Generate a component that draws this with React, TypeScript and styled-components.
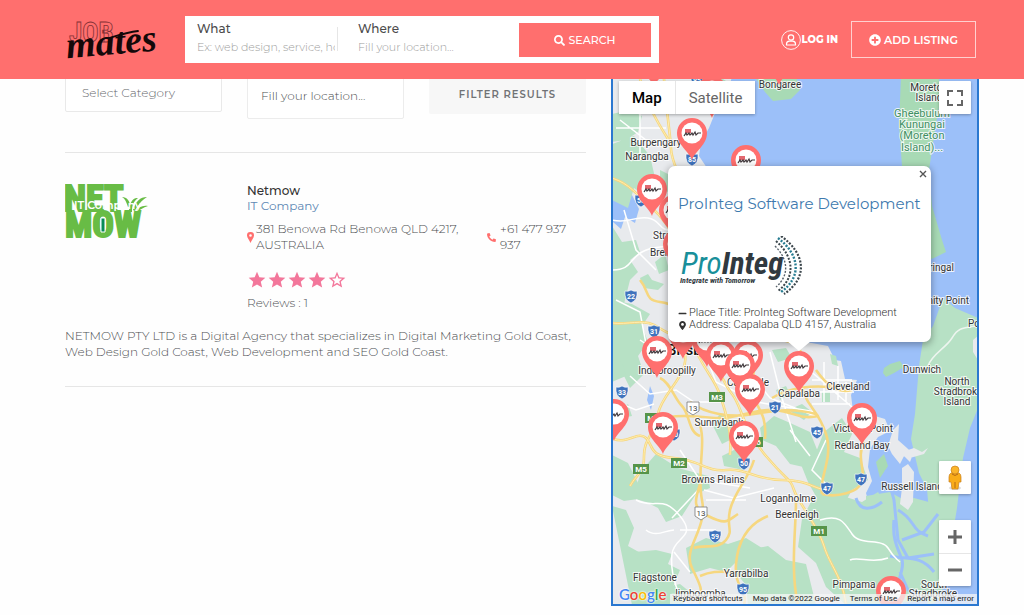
import React from "react";
import styled, { createGlobalStyle } from "styled-components";
import { FaSearch, FaPlusCircle, FaMapMarkerAlt, FaPhone, FaMinus } from "react-icons/fa";
import { MdStar, MdStarBorder } from "react-icons/md";

const coral = "#ff6f6e";
const sans = `Montserrat, Inter, "Open Sans", sans-serif`;
const mapSans = `Roboto, "Liberation Sans", sans-serif`;
const narrow = `"Liberation Sans Narrow", "Roboto Condensed", Roboto, sans-serif`;

const GlobalStyle = createGlobalStyle`
  *, *::before, *::after { box-sizing: border-box; }
  body { margin: 0; background: #fefefe; font-family: ${sans}; font-size: 12px; line-height: 16px; font-weight: 300; color: #4d4f52; }
  button, input, select { font-family: inherit; font-weight: inherit; }
  h1, h2, p { margin: 0; font-weight: inherit; }
  a { text-decoration: none; }
`;

/* ---------- header ---------- */

const Header = styled.header`
  position: fixed;
  inset: 0 0 auto 0;
  z-index: 10;
  display: flex;
  align-items: center;
  height: 79px;
  padding: 0 48px 0 65px;
  background: ${coral};
`;

const LogoLink = styled.a`
  flex: 0 0 120px;
  height: 44px;
`;

const SearchForm = styled.form`
  flex: 0 1 474px;
  display: grid;
  grid-template-columns: 141px 1fr 132px;
  gap: 20px;
  height: 47px;
  padding: 7px 8px 6px 12px;
  background: #fff;
`;

const SearchField = styled.label<{ $divided?: boolean }>`
  display: flex;
  flex-direction: column;
  align-items: flex-start;
  gap: 2px;
  min-width: 0;
  margin-top: -3px;
  padding-right: 3px;
  font-size: 12px;
  line-height: 17px;
  font-weight: 500;
  color: #4b4b4b;
  background: ${(p) => (p.$divided ? "linear-gradient(#e6e6e6, #e6e6e6) right 7px / 1px 24px no-repeat" : "none")};
`;

const SearchInput = styled.input`
  width: 100%;
  height: 16px;
  padding: 0;
  border: 0;
  outline: 0;
  background: transparent;
  font-size: 11px;
  font-weight: 300;
  color: #555;
  &::placeholder { color: #9c9c9c; opacity: 1; }
`;

const SearchButton = styled.button`
  display: flex;
  align-items: center;
  justify-content: center;
  gap: 3px;
  border: 0;
  background: ${coral};
  color: #fff;
  font-size: 11px;
  font-weight: 500;
`;

const Account = styled.nav`
  display: flex;
  align-items: center;
  gap: 13px;
  margin-left: auto;
`;

const LoginLink = styled.a`
  display: flex;
  align-items: center;
  color: #fff;
  font-size: 10px;
  font-weight: 800;
`;

const AddButton = styled.button`
  display: flex;
  align-items: center;
  justify-content: center;
  gap: 3px;
  width: 125px;
  height: 37px;
  padding: 0;
  border: 1px solid #ffd0cf;
  background: transparent;
  color: #fff;
  font-size: 11px;
  font-weight: 600;
`;

/* ---------- page ---------- */

const Main = styled.main`
  display: grid;
  grid-template-columns: 521fr 368fr;
  gap: 25px;
  align-items: start;
  padding: 74px 45px 0 65px;
`;

const Filters = styled.form`
  display: grid;
  grid-template-columns: repeat(3, 1fr);
  gap: 25px;
  align-items: start;
  height: 79px;
  border-bottom: 1px solid #e6e6e6;
`;

const CategorySelect = styled.select`
  height: 38px;
  padding: 0 16px 2px;
  appearance: none;
  border: 1px solid #e9e9e9;
  border-radius: 2px;
  background: #fff;
  font-size: 12px;
  color: #66696c;
`;

const LocationInput = styled.input`
  min-width: 0;
  height: 45px;
  padding: 0 13px 2px;
  border: 1px solid #ececec;
  border-radius: 2px;
  background: #fff;
  font-size: 12px;
  &::placeholder { color: #4d4f52; opacity: 1; }
`;

const FilterButton = styled.button`
  height: 40px;
  padding: 0;
  border: 0;
  border-radius: 2px;
  background: #f7f7f7;
  color: #707275;
  font-size: 10px;
  font-weight: 600;
  letter-spacing: 1px;
`;

const Listing = styled.article`
  display: grid;
  grid-template-columns: repeat(3, 1fr);
  column-gap: 25px;
  padding: 30px 0 26px;
  border-bottom: 1px solid #e6e6e6;
`;

const ListingLogo = styled.a`
  padding-top: 1px;
`;

const Details = styled.div`
  grid-column: span 2;
`;

const ListingName = styled.h2`
  font-size: 12px;
  line-height: 16px;
  font-weight: 500;
  color: #333;
`;

const CategoryLink = styled.a`
  display: block;
  line-height: 14px;
  font-weight: 400;
  color: #6088b4;
`;

const Contact = styled.div`
  display: grid;
  grid-template-columns: 226px 1fr;
  gap: 14px;
  margin-top: 8px;
`;

const ContactItem = styled.div<{ $narrow?: boolean }>`
  display: flex;
  align-items: center;
  gap: ${(p) => (p.$narrow ? "4px" : "2px")};
  padding-right: ${(p) => (p.$narrow ? "14px" : "0")};
  svg { flex: none; color: ${coral}; }
`;

const Rating = styled.div`
  display: flex;
  margin: 17px 0 5px;
  color: #f3779b;
`;

const Description = styled.p`
  grid-column: 1 / -1;
  margin-top: 17px;
`;

/* ---------- map ---------- */

const MapPanel = styled.section`
  position: relative;
  height: 532px;
  overflow: hidden;
  border: 2px solid #2b78d0;
  background: #9cc0f9;
  font-family: ${mapSans};
  font-weight: 400;
`;

const MapCanvas = styled.svg`
  display: block;
  width: 100%;
  height: 100%;
`;

const MapTypes = styled.div`
  position: absolute;
  top: 5px;
  left: 6px;
  display: flex;
  height: 33px;
  background: #fff;
  box-shadow: 0 1px 3px rgba(0, 0, 0, 0.3);
`;

const MapType = styled.button<{ $active?: boolean }>`
  padding: 0 13px;
  border: 0;
  border-left: ${(p) => (p.$active ? "0" : "1px solid #e6e6e6")};
  background: transparent;
  font-size: 15px;
  font-weight: ${(p) => (p.$active ? 500 : 400)};
  color: ${(p) => (p.$active ? "#000" : "#666")};
`;

const MapTool = styled.div<{ $top: number }>`
  position: absolute;
  right: 6px;
  top: ${(p) => p.$top}px;
  display: flex;
  flex-direction: column;
  width: 32px;
  background: #fff;
  border-radius: 1px;
  box-shadow: 0 1px 3px rgba(0, 0, 0, 0.3);
`;

const ToolButton = styled.button`
  display: grid;
  place-items: center;
  height: 33px;
  padding: 0;
  border: 0;
  background: transparent;
  & + & { border-top: 1px solid #e6e6e6; }
`;

const InfoWindow = styled.div`
  position: absolute;
  top: 90px;
  left: 55px;
  width: 263px;
  height: 176px;
  padding: 28px 10px 0;
  border-radius: 7px;
  background: #fff;
  box-shadow: 0 2px 7px 1px rgba(0, 0, 0, 0.3);
  font-size: 10px;
  line-height: 12px;
  color: #333;
  &::after {
    content: "";
    position: absolute;
    top: 175px;
    left: 119px;
    border: 12px solid transparent;
    border-top: 10px solid #fff;
    border-bottom: 0;
  }
`;

const InfoTitle = styled.h2`
  font-family: ${sans};
  font-size: 15px;
  line-height: 20px;
  white-space: nowrap;
  a { color: #3d79ae; }
`;

const InfoLogo = styled.svg`
  display: block;
  margin: 22px 0 11px;
`;

const InfoLine = styled.p`
  display: flex;
  align-items: center;
  gap: 2px;
  font-size: 11px;
  font-weight: 300;
  white-space: nowrap;
`;

const CloseButton = styled.button`
  position: absolute;
  top: 3px;
  right: 3px;
  width: 10px;
  height: 10px;
  padding: 0;
  border: 0;
  background: transparent;
  line-height: 0;
`;

const GoogleMark = styled.a`
  position: absolute;
  left: 6px;
  bottom: 1px;
  font-size: 15px;
  line-height: 18px;
  font-family: Lato, sans-serif;
  font-weight: 600;
  text-shadow: 0 0 2px #fff, 0 0 2px #fff;
`;

const Attribution = styled.div`
  position: absolute;
  right: 0;
  bottom: 0;
  display: flex;
  gap: 10px;
  height: 10px;
  padding: 0 3px;
  background: rgba(245, 245, 245, 0.75);
  font-size: 8px;
  line-height: 10px;
  color: #222;
  white-space: nowrap;
  a, button { padding: 0; border: 0; background: transparent; font-size: 8px; line-height: 10px; color: #222; }
`;

const Letter = styled.span<{ $c: string }>`
  color: ${(p) => p.$c};
`;

/* ---------- map data ---------- */

type Point = [number, number];

const pins: Point[] = [
  [712, 91], [779, 58], [654, 60],
  [692, 133], [746, 160], [674, 210], [678, 244], [652, 189],
  [683, 332], [707, 340], [748, 355], [657, 351], [721, 355], [740, 365], [750, 389], [799, 366],
  [614, 414], [663, 427], [744, 436], [862, 418], [891, 591],
];

const labels: { t: string; x: number; y: number; s?: number; w?: number; c?: string; a?: "start" | "middle" | "end" }[] = [
  { t: "Bongaree", x: 780, y: 88 },
  { t: "Burpengary", x: 656, y: 146 },
  { t: "Narangba", x: 647, y: 160 },
  { t: "Strathpine", x: 653, y: 239, a: "start" },
  { t: "Brendale", x: 650, y: 256, a: "start" },
  { t: "Brisbane", x: 667, y: 355, s: 15, w: 500, a: "start", c: "#111" },
  { t: "Indooroopilly", x: 667, y: 374 },
  { t: "Carindale", x: 748, y: 386 },
  { t: "Capalaba", x: 799, y: 397 },
  { t: "Cleveland", x: 848, y: 390 },
  { t: "Sunnybank", x: 719, y: 426 },
  { t: "Victoria Point", x: 863, y: 432 },
  { t: "Redland Bay", x: 862, y: 449 },
  { t: "Browns Plains", x: 713, y: 483 },
  { t: "Loganholme", x: 788, y: 502 },
  { t: "Beenleigh", x: 797, y: 518 },
  { t: "Russell Island", x: 912, y: 490 },
  { t: "Flagstone", x: 655, y: 581 },
  { t: "Yarrabilba", x: 746, y: 577 },
  { t: "Jimboomba", x: 699, y: 597 },
  { t: "Pimpama", x: 854, y: 588 },
  { t: "South", x: 934, y: 588 },
  { t: "Stradbroke", x: 933, y: 597 },
  { t: "Dunwich", x: 922, y: 373 },
  { t: "Amity Point", x: 969, y: 304, a: "end" },
  { t: "Kooringal", x: 954, y: 271, a: "end" },
  { t: "Point Lookout", x: 968, y: 327, a: "start" },
  { t: "North", x: 957, y: 385 },
  { t: "Stradbroke", x: 958, y: 395 },
  { t: "Island", x: 957, y: 405 },
  { t: "Moreton", x: 929, y: 91 },
  { t: "Island", x: 929, y: 101 },
  { t: "Gheebulum", x: 922, y: 117, s: 11, c: "#3f8f63" },
  { t: "Kunungai", x: 922, y: 128, s: 11, c: "#3f8f63" },
  { t: "(Moreton", x: 922, y: 139, s: 11, c: "#3f8f63" },
  { t: "Island)...", x: 922, y: 151, s: 11, c: "#3f8f63" },
];

const shields: [string, number, number][] = [
  ["85", 697, 80], ["85", 692, 159], ["58", 641, 200], ["22", 631, 296], ["31", 654, 331], ["33", 622, 392],
  ["21", 775, 407], ["20", 674, 434], ["50", 744, 463], ["45", 817, 432], ["47", 861, 479], ["47", 827, 488],
  ["59", 715, 536], ["95", 743, 589],
];
const motorways: [string, number, number][] = [
  ["M3", 717, 397], ["M2", 679, 463], ["M5", 641, 469], ["M1", 819, 531], ["M7", 653, 418], ["M6", 755, 442],
];
const routes: Point[] = [[693, 408], [701, 513]];

const greens = [
  "M612 114l18-4 12 6-4 16-12 8-14 2zM612 144l22-8 16 20 6 26-8 16-14-10-6 20-16-8z",
  "M612 226l10 16 14-2 4 12-10 8 8 12-8 8-6 24-12 4z",
  "M640 278l8-4 4 6 12 4-6 6-14-2zM655 262l10-8 4 16-10 4z",
  "M612 300l20 4 18 10-8 12 6 16-10 14 6 18-14 14-8-16-10-2z",
  "M705 79h18l9 6-12 14-6-10-10 0z",
  "M660 170l8 4v18l-8-4z",
  "M612 455l16 8 12 24-2 12-14 2-12-6z",
  "M642 470l14-16 22 14 30 8 2 12-14 6-14 22-16 6-8-14-12-6-14-4z",
  "M612 506l14 4 8 18-6 18 18 10 2 22 12 10 20-4 10 8-8 13h-50z",
  "M634 552l22-2 16 4-4 10 12 6-10 24-12-6-14-18z",
  "M712 424l8-10 14 8 4 14-16 8zM722 456l16-8 10 10-4 12-20-4z",
  "M760 428l14-12 14 6 22 10 8 20-10 16-18-4-14-18-14-6z",
  "M800 462l16-10 8-20 18-14 10 16-8 18 16 6 8 22-16 10-10 18-24-8-10-18z",
  "M812 500l24-6 26 8 16-10 10 16-4 20 18 14 8 18-14 14 2 31h-52l-20-18-10-24-18-16 4-28z",
  "M686 548l20-10 22 6 18-6 16 10-4 16-22-2-10 10-16-4-20 6z",
  "M738 552l30-6 18 14 20 4 10 41h-68l-2-20-10-12z",
  "M776 390l10-4 4 8-10 6zM788 410l14-6 10 8-8 8zM772 350l14-2 6 10-14 4z",
  "M612 360l10 2 4 14-14 6zM620 410l8-6 4 12-10 2z",
  "M822 392h8v10h-8zM830 354l6 2 2 10-6-2z",
];

const yellowRoads = [
  "M664 79c2 30 6 52 7 70s14 30 16 60 2 70-4 90 2 36 10 46",
  "M640 79c8 28 18 44 28 60M612 178c18 6 24 16 40 30s22 30 30 42",
  "M612 323c16 2 30-4 42 2s18 14 34 8 24 10 40 8 42-8 70 4",
  "M694 345c6 20 20 32 26 50s12 36 10 60M684 350c8 24-22 42-26 64s-14 24-14 42-6 16-14 30",
  "M612 438c14 8 26-8 34 0s2 18 28 20 32 14 52 12 30 10 56 10 30 8 44 10",
  "M700 352c20 12 22 30 32 42s10 34 34 62 24 22 28 34 24 36 30 56 18 30 22 58",
  "M655 420c18-6 40-4 60-2s40-10 60-8 24 10 44 6M690 402c16 12 40 16 64 12s40-6 62 0",
  "M702 476c-4 20-14 30 6 40s20 4 30-2M698 420c10 20-2 50 4 80s-20 48-10 68 10 20 8 37",
  "M754 460c-6 20-20 32-24 50s4 20-4 30-22 4-32 8M700 576c14-6 22-4 36-4M768 516c-20 8-30 24-32 48s12 26 8 41",
  "M800 350c6 14-4 26 4 44s14 16 22 40-8 46-4 60M772 398c16-10 40-14 66-10M816 370c10 14 20 24 36 20",
  "M822 494c16 4 36-2 40-12s-6-26 2-40M796 500c0 30-6 70 2 105M640 280c10 12 4 20 20 22s20 10 26 18",
  "M757 345c0 22-8 36-4 50s14 18 12 44M660 378c10 4 14 20 22 28s6 26 18 30",
];
const whiteRoads = [
  "M612 220c16 4 22-4 36-2s10 14 26 12M612 270c20 0 16-10 30-18s26-2 30-10",
  "M624 210l12 40 20 20M630 376l20 18 26-4 18 12 30 0M612 400l24 10 18-6",
  "M706 356l10 26 40 20 60 10M770 352l10 40 16 50M730 348l40 50 50 20",
  "M636 500c20 10 26-6 44 16s-6 20-8 38 6 50 20 52M672 518l28-30M680 530h36",
  "M646 530c10 8 20 0 28 0M674 552l16 20M680 450l20 30 50 8M706 500h40M704 490l30 8 40-10",
  "M820 520c20-6 24 2 32 14s30 4 36 14 8 10 12 14M850 560c8-4 22 4 38-2M826 440l-14 30 16 16",
  "M824 362v40M838 366v34M846 382v20M812 380h40M810 392h44M812 404h38M800 362l60 52M790 430l20 26",
  "M616 300l24 12 6 32M640 340l30 20M620 120l26 20 18 4M640 110v50M616 128h50M700 86h30",
];

const Pin = ({ x, y }: { x: number; y: number }) => (
  <g transform={`translate(${x} ${y})`}>
    <path d="M0 27C-3 18-15 12-15 0a15 15 0 0 1 30 0C15 12 3 18 0 27z" fill={coral} />
    <circle r="10.500" fill="#fff" />
    <path d="M-7-4h6v4h-6z" fill="#e2686f" />
    <path d="M-8 3l2-3 1 2 2-2 1 2 2-2 1 2 2-3 1 3 2-2h3" fill="none" stroke="#40383c" strokeWidth="1.200" />
  </g>
);

const Terrain = () => (
  <>
    <path
      fill="#e8eaed"
      d="M612 76h120l-5 22-10 10-8 20-8 14-2 14 8 12 4 40v100l60 34h35l22 4 7 14 6 1 4 18 12 1-6 15 2 16 6 12 16-7 10 3 5 12-12 6-8 12-2 18 4 14-6 12 4 16-6 22 16 34 18 22 8 28-8 28H612z"
    />
    <path fill="#a8dab5" d="M754 76h42l4 14-9 9-18 2-8-9z" />
    <path fill="#a8dab5" d="M901 76h38l1 26-5 28-6 40 3 36 10 34 4 12-12 6-12 4-14-60-6-36-3-40z" />
    <path fill="#b7e1c5" d="M943 298l12 10 23 10v90l-8 20-7 30-6 50-5 30-4 40-12 24-8 3-3-20 6-50-4-46-8-16-8-34 4-25 4-48 4-26 10-14z" />
    <path fill="#e8eaed" d="M612 168l10 4-4 20 8 6-14 6zM973 340l5-4v24l-5-8z" />
    <path fill="#9cc0f9" d="M612 182l9 5-2 10 12-4 8 16-4 14-10-6-4 12-9-8zM650 386l4 10-3 14-4-10z" />
    {greens.map((d) => <path key={d} d={d} fill="#b7e1c5" />)}
    <path fill="#a8dab5" d="M884 368l6-4 10-3 4 6-10 6-8 4-3-4zM876 462l8-8 4 12-8 12z" />
    <path fill="#b7e1c5" d="M866 496l24-4 14 8 10-2 22 6 6 32-4 64-56 4-16-40z" />
    <path fill="#e8eaed" d="M893 430l6-6-1 16 9 8 6 6-3 8-6-6-4 8-8-10-4-8zM902 468l6-4 6 8-1 30-5 8-8-6 2-16zM896 454l18-6 8 4 6-4-4 6-14 4z" />
    <path
      fill="none"
      stroke="#9cc0f9"
      strokeWidth="3"
      d="M856 498c4 14 16 12 26 4M886 470l8 30 4 40 10 18 26-4M898 510c18 10 12 20 30 26M902 540l22-8 14-18M890 556c16 4 30-2 44 16M900 572l8 18 18 10M894 520c-2 20 4 28 8 40s-12 28-2 44"
    />
    {whiteRoads.map((d) => <path key={d} d={d} fill="none" stroke="#fff" strokeWidth="1.500" />)}
    {yellowRoads.map((d) => <path key={d} d={d} fill="none" stroke="#f6d77f" strokeWidth="2.600" />)}
    {yellowRoads.slice(0, 6).map((d) => <path key={d} d={d} fill="none" stroke="#ffedb0" strokeWidth="1" />)}
    <path d="M928 366c4-12 18-18 24-28s10-10 24-12" fill="none" stroke="#edf5ef" strokeWidth="1.500" />
  </>
);

const BrandLogo = () => (
  <svg width="102" height="44" viewBox="65 18 102 44" role="img" aria-label="Job Mates">
    <text x="69" y="42" fontFamily={narrow} fontSize="27" fontWeight="700" fill={coral} stroke="#842f35" strokeWidth="0.8">JOB</text>
    <g transform="rotate(-5 70 57)">
      <text x="67" y="58" fontFamily='"Liberation Serif", serif' fontStyle="italic" fontWeight="700" fontSize="38" fill="#140809">mates</text>
    </g>
    <path d="M109 38c10-3 20-6 29-7" fill="none" stroke="#140809" strokeWidth="1.800" strokeLinecap="round" />
  </svg>
);

const NetmowLogo = () => (
  <svg width="84" height="56" viewBox="64 184 84 56" role="img" aria-label="Netmow IT Company">
    <g fontFamily={narrow} fontWeight="700" fill="#68bc45" stroke="#68bc45" strokeWidth="2">
      <text x="63" y="211" fontSize="36">NET</text>
      <text x="64" y="237" fontSize="36">MOW</text>
    </g>
    <path d="M128 212c0-9 4-15 9-14-5 4-6 8-6 14zM132 210c3-9 7-13 14-13-6 4-9 8-12 14zM134 212c3-5 8-7 13-6-5 2-8 3-10 6zM127 207c-2-6-3-8-6-10 5 0 8 4 8 9z" fill="#68bc45" />
    <path d="M100 218h4v14h-4z" fill="#078b58" stroke="#fff" strokeWidth="1" />
    <text x="73" y="209" fontFamily="Montserrat, Inter, sans-serif" fontSize="11" fontWeight="600" fill="#fff">IT Company</text>
  </svg>
);

const logoArcs: [string, number, string][] = [
  ["M97 10c13 13 15 29 1 41", 1.4, "#56616a"],
  ["M98 5c18 16 20 36 2 50", 2, "#3b464c"],
  ["M100 2c22 17 24 39 3 54", 2.4, "#287d92"],
  ["M103 0c25 18 27 42 3 58", 2.2, "#3b464c"],
];

const ProIntegLogo = () => (
  <InfoLogo width="124" height="60" viewBox="0 0 124 60" role="img" aria-label="ProInteg, Integrate with Tomorrow">
    <text x="3" y="38" fontFamily='"Roboto Condensed", "Liberation Sans Narrow", Roboto, sans-serif' fontStyle="italic" fontSize="31">
      <tspan fill="#198f9a">Pro</tspan>
      <tspan fill="#303940" fontWeight="700">Integ</tspan>
    </text>
    <text x="2" y="47" fontFamily='"Roboto Condensed", Roboto, sans-serif' fontSize="8" fontWeight="700" fontStyle="italic" fill="#303940">Integrate with Tomorrow</text>
    {logoArcs.map(([d, width, color]) => (
      <path key={d} d={d} fill="none" stroke={color} strokeWidth={width} strokeDasharray="2 1.500" />
    ))}
  </InfoLogo>
);

const PlaceMap = () => (
  <MapPanel aria-label="Listings map">
    <MapCanvas viewBox="613 76 364 528" preserveAspectRatio="xMidYMid slice">
      <Terrain />
      {shields.map(([t, x, y]) => (
        <g key={t + x} transform={`translate(${x} ${y})`}>
          <path d="M-6-5q3 1 6-1q3 2 6 1q1 9-6 12q-7-3-6-12z" fill="#3f73bd" stroke="#fff" strokeWidth="0.600" />
          <text y="3" textAnchor="middle" fontSize="7" fontWeight="700" fill="#fff">{t}</text>
        </g>
      ))}
      {motorways.map(([t, x, y]) => (
        <g key={t} transform={`translate(${x} ${y})`}>
          <rect x="-8" y="-5" width="16" height="10" fill="#569449" />
          <text y="3" textAnchor="middle" fontSize="8" fontWeight="700" fill="#fff">{t}</text>
        </g>
      ))}
      {routes.map(([x, y]) => (
        <g key={x} transform={`translate(${x} ${y})`}>
          <path d="M-6-6h12v9l-6 4-6-4z" fill="#fff" stroke="#777" strokeWidth="0.800" />
          <text y="3" textAnchor="middle" fontSize="8" fill="#444">13</text>
        </g>
      ))}
      {labels.map((l) => (
        <text
          key={l.t + l.x + l.y}
          x={l.x}
          y={l.y}
          fontSize={l.s ?? 10}
          fontWeight={l.w ?? 400}
          fill={l.c ?? "#333"}
          textAnchor={l.a ?? "middle"}
          stroke="#fff"
          strokeWidth="2"
          strokeOpacity="0.8"
          paintOrder="stroke"
        >
          {l.t}
        </text>
      ))}
      {pins.map(([x, y]) => <Pin key={`${x}-${y}`} x={x} y={y} />)}
    </MapCanvas>

    <InfoWindow role="dialog" aria-label="ProInteg Software Development">
      <CloseButton aria-label="Close">
        <svg width="10" height="10" viewBox="0 0 10 10"><path d="M2 2l6 6M8 2l-6 6" stroke="#555" strokeWidth="1.400" /></svg>
      </CloseButton>
      <InfoTitle><a href="#prointeg">ProInteg Software Development</a></InfoTitle>
      <ProIntegLogo />
      <InfoLine><FaMinus size={9} />Place Title: ProInteg Software Development</InfoLine>
      <InfoLine><FaMapMarkerAlt size={9} />Address: Capalaba QLD 4157, Australia</InfoLine>
    </InfoWindow>

    <MapTypes>
      <MapType $active>Map</MapType>
      <MapType>Satellite</MapType>
    </MapTypes>
    <MapTool $top={5}>
      <ToolButton aria-label="Toggle fullscreen">
        <svg width="16" height="16" viewBox="0 0 16 16"><path d="M1 6V1h5M10 1h5v5M15 10v5h-5M6 15H1v-5" fill="none" stroke="#666" strokeWidth="2" /></svg>
      </ToolButton>
    </MapTool>
    <MapTool $top={385}>
      <ToolButton aria-label="Street View">
        <svg width="16" height="26" viewBox="0 0 16 26">
          <ellipse cx="8" cy="23" rx="6" ry="2" fill="#ddd" />
          <path d="M4 8h8q2 1 2 4v5h-2l-1 7H5l-1-7H2v-5q0-3 2-4z" fill="#f9ac19" stroke="#c9801c" strokeWidth="0.700" />
          <circle cx="8" cy="5" r="4" fill="#fbb52b" stroke="#c9801c" strokeWidth="0.700" />
          <path d="M5 9q3 3 6 0M8 17v6" fill="none" stroke="#b66b17" />
        </svg>
      </ToolButton>
    </MapTool>
    <MapTool $top={444}>
      <ToolButton aria-label="Zoom in">
        <svg width="16" height="16" viewBox="0 0 16 16"><path d="M8 1v14M1 8h14" stroke="#666" strokeWidth="3" /></svg>
      </ToolButton>
      <ToolButton aria-label="Zoom out">
        <svg width="16" height="16" viewBox="0 0 16 16"><path d="M1 8h14" stroke="#666" strokeWidth="3" /></svg>
      </ToolButton>
    </MapTool>

    <GoogleMark href="#google" aria-label="Google">
      <Letter $c="#4285f4">G</Letter><Letter $c="#ea4335">o</Letter><Letter $c="#fbbc05">o</Letter><Letter $c="#4285f4">g</Letter><Letter $c="#34a853">l</Letter><Letter $c="#ea4335">e</Letter>
    </GoogleMark>
    <Attribution>
      <button>Keyboard shortcuts</button>
      <span>Map data ©2022 Google</span>
      <a href="#terms">Terms of Use</a>
      <a href="#report">Report a map error</a>
    </Attribution>
  </MapPanel>
);

export default function App() {
  return (
    <>
      <GlobalStyle />
      <Header>
        <LogoLink href="#home"><BrandLogo /></LogoLink>
        <SearchForm onSubmit={(e) => e.preventDefault()}>
          <SearchField $divided>
            What
            <SearchInput placeholder="Ex: web design, service, hotel" />
          </SearchField>
          <SearchField>
            Where
            <SearchInput placeholder="Fill your location..." />
          </SearchField>
          <SearchButton><FaSearch size={11} />SEARCH</SearchButton>
        </SearchForm>
        <Account>
          <LoginLink href="#login">
            <svg width="20" height="20" viewBox="0 0 20 20" fill="none" stroke="#fff">
              <circle cx="10" cy="10" r="9.400" strokeWidth="0.900" />
              <circle cx="10" cy="7.500" r="2.700" strokeWidth="1.200" />
              <path d="M5.500 15v-1q0-2.500 2.800-2.800h3.400q2.800.3 2.800 2.800v1z" strokeWidth="1.200" />
            </svg>
            LOG IN
          </LoginLink>
          <AddButton><FaPlusCircle size={12} />ADD LISTING</AddButton>
        </Account>
      </Header>

      <Main>
        <div>
          <Filters onSubmit={(e) => e.preventDefault()}>
            <CategorySelect aria-label="Category"><option>Select Category</option></CategorySelect>
            <LocationInput aria-label="Location" placeholder="Fill your location..." />
            <FilterButton>FILTER RESULTS</FilterButton>
          </Filters>
          <Listing>
            <ListingLogo href="#netmow"><NetmowLogo /></ListingLogo>
            <Details>
              <ListingName>Netmow</ListingName>
              <CategoryLink href="#it-company">IT Company</CategoryLink>
              <Contact>
                <ContactItem>
                  <svg width="7" height="11" viewBox="0 0 7 11"><path fill="currentColor" fillRule="evenodd" d="M3.500 0A3.400 3.400 0 0 1 7 3.500C7 5.800 4.500 8 3.500 11 2.500 8 0 5.800 0 3.500A3.400 3.400 0 0 1 3.500 0zm0 2.200a1.300 1.300 0 1 0 0 2.600 1.300 1.300 0 0 0 0-2.600z" /></svg>
                  <span>381 Benowa Rd Benowa QLD 4217, AUSTRALIA</span>
                </ContactItem>
                <ContactItem $narrow>
                  <FaPhone size={9} transform="scale(-1 1)" />
                  <span>+61 477 937 937</span>
                </ContactItem>
              </Contact>
              <Rating role="img" aria-label="4 out of 5">
                {[0, 1, 2, 3].map((i) => <MdStar key={i} size={20} />)}
                <MdStarBorder size={20} />
              </Rating>
              <p>Reviews : 1</p>
            </Details>
            <Description>
              NETMOW PTY LTD is a Digital Agency that specializes in Digital Marketing Gold Coast, Web Design Gold
              Coast, Web Development and SEO Gold Coast.
            </Description>
          </Listing>
        </div>
        <PlaceMap />
      </Main>
    </>
  );
}
